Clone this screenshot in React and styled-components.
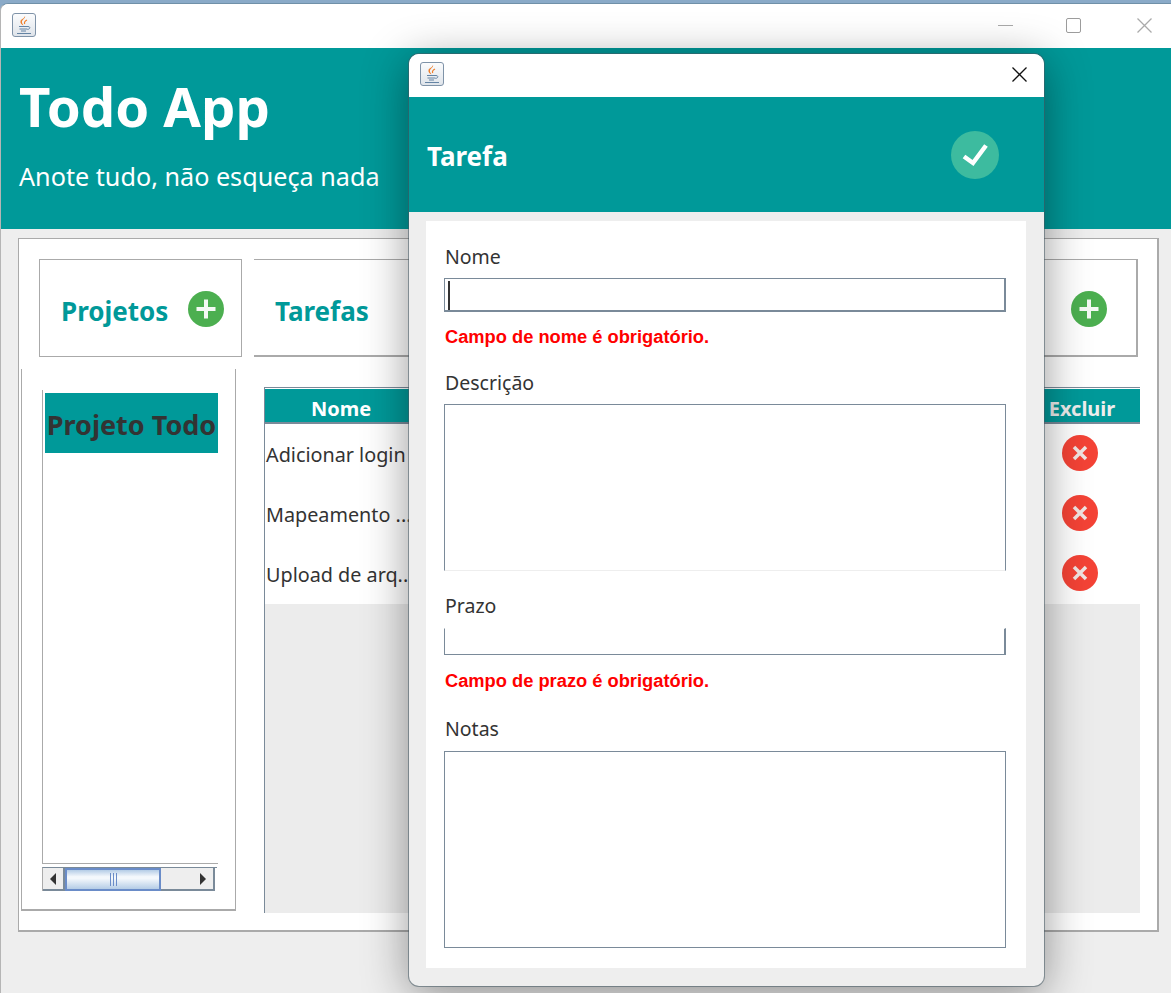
import styled, { createGlobalStyle } from 'styled-components';

const teal = '#009999';
const line = '#aaaaaa';
const steel = '#7a8a99';
const font = '"Noto Sans", "Open Sans", sans-serif';

const projects = ['Adicionar login', 'Mapeamento ...', 'Upload de arq...'];

const GlobalStyle = createGlobalStyle`
    html, body {
        margin: 0;
        padding: 0;
        background: #8aaac8;
    }
    body {
        font-family: ${font};
        color: #333333;
    }
`;

const JavaIcon = () => (
    <IconFrame>
        <svg width="22" height="22" viewBox="0 0 22 22" fill="none">
            <path d="M12 2c1 2.500-3.500 3.500-3 6.500.200 1.300 1.200 2 1.500 3-2-1-3.500-2.500-3-4.500C8 5 11.500 4.500 12 2z" fill="#ee7f2d" />
            <path d="M14 6c-2 1-3.200 2-2.300 4" stroke="#ee7f2d" strokeWidth="1.200" />
            <path d="M6 12.500h9M6.500 15h8M8 17h5M4 19.500h14" stroke="#6484a4" strokeWidth="1" />
            <path d="M15 12.500c2.500 0 2.500 2.500-.5 3" stroke="#6484a4" strokeWidth="1" />
        </svg>
    </IconFrame>
);

const PlusIcon = () => (
    <svg width="36" height="36" viewBox="0 0 36 36">
        <circle cx="18" cy="18" r="18" fill="#4caf50" />
        <path d="M18 8.500v19M8.500 18h19" stroke="#f4f9f4" strokeWidth="4" />
    </svg>
);

const RemoveIcon = () => (
    <svg width="36" height="36" viewBox="0 0 36 36">
        <circle cx="18" cy="18" r="18" fill="#f44336" />
        <path d="M12 12l12 12M24 12L12 24" stroke="#f0e4e2" strokeWidth="3.500" />
    </svg>
);

const CheckIcon = () => (
    <svg width="48" height="48" viewBox="0 0 48 48">
        <circle cx="24" cy="24" r="24" fill="#3dbb9f" />
        <path d="M13 25.500l9 6.500 13-17.500" fill="none" stroke="#ffffff" strokeWidth="4.500" />
    </svg>
);

const CloseIcon = ({ color = '#aaaaaa' }) => (
    <svg width="15" height="15" viewBox="0 0 15 15">
        <path d="M.5.500l14 14M14.500.500l-14 14" stroke={color} strokeWidth="1.300" />
    </svg>
);

const App = () => {
    return (
        <Page>
            <GlobalStyle />
            <Window>
                <TitleBar>
                    <JavaIcon />
                    <WindowControls>
                        <Minimize />
                        <Maximize />
                        <CloseIcon />
                    </WindowControls>
                </TitleBar>
                <Header>
                    <AppTitle>Todo App</AppTitle>
                    <AppSubtitle>Anote tudo, não esqueça nada</AppSubtitle>
                </Header>
                <Content>
                    <Panel>
                        <ProjectsCard>
                            <CardTitle>Projetos</CardTitle>
                            <PlusIcon />
                        </ProjectsCard>
                        <TasksCard>
                            <CardTitle>Tarefas</CardTitle>
                            <PlusIcon />
                        </TasksCard>
                        <Sidebar>
                            <ProjectList>
                                <ProjectItem>Projeto Todo</ProjectItem>
                            </ProjectList>
                            <Scrollbar>
                                <ArrowButton><LeftArrow /></ArrowButton>
                                <Thumb><Grip /><Grip /><Grip /></Thumb>
                                <Track />
                                <ArrowButton><RightArrow /></ArrowButton>
                            </Scrollbar>
                        </Sidebar>
                        <TaskTable>
                            <HeadRow>
                                <NameHead>Nome</NameHead>
                                <DeleteHead>Excluir</DeleteHead>
                            </HeadRow>
                            {projects.map((name) => (
                                <TaskRow key={name}>
                                    <TaskName>{name}</TaskName>
                                    <DeleteCell><RemoveIcon /></DeleteCell>
                                </TaskRow>
                            ))}
                            <TableEmpty />
                        </TaskTable>
                    </Panel>
                </Content>
            </Window>

            <Dialog>
                <DialogBar>
                    <JavaIcon />
                    <CloseIcon color="#111111" />
                </DialogBar>
                <DialogHeader>
                    <DialogTitle>Tarefa</DialogTitle>
                    <CheckIcon />
                </DialogHeader>
                <Form>
                    <Label>Nome</Label>
                    <NameInput><Caret /></NameInput>
                    <ErrorText $top={14}>Campo de nome é obrigatório.</ErrorText>
                    <Label $top={21}>Descrição</Label>
                    <DescriptionArea />
                    <Label $top={21}>Prazo</Label>
                    <DateInput />
                    <ErrorText $top={15}>Campo de prazo é obrigatório.</ErrorText>
                    <Label $top={23}>Notas</Label>
                    <NotesArea />
                </Form>
            </Dialog>
        </Page>
    );
};

const Page = styled.div`
    position: relative;
    width: 1171px;
    height: 993px;
    overflow: hidden;
    padding-top: 3px;
    box-sizing: border-box;
`;

const Window = styled.div`
    height: 990px;
    box-sizing: border-box;
    display: flex;
    flex-direction: column;
    background: #eeeeee;
    border-top: 1px solid #7090a8;
    border-left: 1px solid #b5b5b5;
    border-radius: 8px 0 0 0;
    overflow: hidden;
`;

const TitleBar = styled.div`
    flex: 0 0 44px;
    box-sizing: border-box;
    display: flex;
    align-items: center;
    justify-content: space-between;
    padding: 0 19px 2px 11px;
    background: #ffffff;
`;

const IconFrame = styled.div`
    width: 24px;
    height: 24px;
    box-sizing: border-box;
    display: flex;
    align-items: center;
    justify-content: center;
    border: 1px solid #7f93a8;
    border-radius: 3px;
    background: linear-gradient(#fbfcfd, #dfe4ea);
`;

const WindowControls = styled.div`
    display: flex;
    align-items: center;
    gap: 55px;
`;

const Minimize = styled.div`
    width: 15px;
    height: 1px;
    margin-right: -2px;
    background: ${line};
`;

const Maximize = styled.div`
    width: 15px;
    height: 15px;
    margin-right: 1px;
    box-sizing: border-box;
    border: 1px solid #9c9c9c;
    border-radius: 2px;
`;

const Header = styled.div`
    flex: 0 0 181px;
    box-sizing: border-box;
    padding: 19px 0 0 18px;
    background: ${teal};
    color: #ffffff;
`;

const AppTitle = styled.div`
    font-size: 54.5px;
    font-weight: 700;
    line-height: 78px;
`;

const AppSubtitle = styled.div`
    margin-top: 11px;
    font-size: 25.2px;
    line-height: 40px;
`;

const Content = styled.div`
    flex: 1;
    padding: 9px 11px 0 17px;
`;

const Panel = styled.div`
    width: 1141px;
    height: 694px;
    box-sizing: border-box;
    display: grid;
    grid-template-columns: 221px 884px;
    grid-template-rows: 98px 542px;
    column-gap: 12px;
    row-gap: 12px;
    padding: 20px 0 0 2px;
    background: #ffffff;
    border: 1px solid ${line};
    border-width: 1px 2px 2px 1px;
`;

const Card = styled.div`
    box-sizing: border-box;
    display: flex;
    align-items: center;
    justify-content: space-between;
    padding-top: 2px;
    border: 1px solid ${line};
`;

const ProjectsCard = styled(Card)`
    margin-left: 18px;
    padding-left: 21px;
    padding-right: 17px;
`;

const TasksCard = styled(Card)`
    padding-left: 21px;
    padding-right: 29px;
    border-width: 1px 2px 2px 0;
`;

const CardTitle = styled.div`
    font-size: 26px;
    font-weight: 700;
    color: ${teal};
    margin-top: 4px;
`;

const Sidebar = styled.div`
    width: 215px;
    box-sizing: border-box;
    padding: 21px 0 0 20px;
    border: 1px solid ${line};
    border-width: 0 1px 2px 1px;
`;

const ProjectList = styled.div`
    width: 176px;
    height: 474px;
    box-sizing: border-box;
    padding: 3px 0 0 2px;
    border-left: 1px solid ${line};
    border-bottom: 1px solid ${line};
`;

const ProjectItem = styled.div`
    height: 60px;
    box-sizing: border-box;
    padding-top: 3px;
    display: flex;
    align-items: center;
    justify-content: center;
    background: ${teal};
    font-size: 27px;
    font-weight: 700;
    white-space: nowrap;
`;

const Scrollbar = styled.div`
    width: 174px;
    height: 23px;
    margin-top: 3px;
    display: flex;
    border-top: 1px solid ${steel};
    border-left: 1px solid ${line};
`;

const ArrowButton = styled.div`
    width: 22px;
    box-sizing: border-box;
    display: flex;
    align-items: center;
    justify-content: center;
    background: #eeeeee;
    border-bottom: 2px solid ${steel};
    border-right: 2px solid ${steel};
`;

const LeftArrow = styled.div`
    border: 6px solid transparent;
    border-left-width: 0;
    border-right-color: #333333;
`;

const RightArrow = styled.div`
    border: 6px solid transparent;
    border-right-width: 0;
    border-left-color: #333333;
`;

const Thumb = styled.div`
    width: 96px;
    box-sizing: border-box;
    display: flex;
    align-items: center;
    justify-content: center;
    gap: 2px;
    border: 2px solid #6a8cc8;
    background: linear-gradient(#b4cce6, #f4f8fc 35%, #f4f8fc 45%, #b4cce6);
`;

const Grip = styled.div`
    width: 1px;
    height: 13px;
    background: #6a8cc8;
`;

const Track = styled.div`
    width: 32px;
    background: #eeeeee;
    border-bottom: 2px solid ${steel};
`;

const TaskTable = styled.div`
    width: 876px;
    height: 526px;
    margin: 18px 0 0 10px;
    box-sizing: border-box;
    display: flex;
    flex-direction: column;
    border-left: 1px solid ${steel};
    border-top: 1px solid ${steel};
`;

const HeadRow = styled.div`
    height: 36px;
    box-sizing: border-box;
    display: flex;
    justify-content: space-between;
    padding-top: 6px;
    border-top: 1px solid #ffffff;
    border-bottom: 2px solid ${steel};
    background: ${teal};
    color: #ffffff;
    font-size: 20px;
    font-weight: 700;
`;

const NameHead = styled.div`
    width: 152px;
    text-align: center;
`;

const DeleteHead = styled.div`
    width: 116px;
    text-align: center;
    color: #eeeeee;
`;

const TaskRow = styled.div`
    height: 60px;
    display: flex;
    justify-content: space-between;
    background: #ffffff;
`;

const TaskName = styled.div`
    padding-left: 1px;
    font-size: 19.8px;
    line-height: 62px;
`;

const DeleteCell = styled.div`
    width: 120px;
    box-sizing: border-box;
    padding-bottom: 2px;
    display: flex;
    align-items: center;
    justify-content: center;
`;

const TableEmpty = styled.div`
    flex: 1;
    background: #ececec;
`;

const Dialog = styled.div`
    position: absolute;
    left: 409px;
    top: 54px;
    width: 635px;
    height: 932px;
    display: flex;
    flex-direction: column;
    border-radius: 10px;
    overflow: hidden;
    background: #eeeeee;
    box-shadow: 0 0 0 1px rgba(70, 90, 100, 0.55), 0 8px 46px rgba(0, 0, 0, 0.42);
`;

const DialogBar = styled.div`
    flex: 0 0 43px;
    display: flex;
    align-items: center;
    justify-content: space-between;
    padding: 0 17px 3px 11px;
    box-sizing: border-box;
    background: #ffffff;
`;

const DialogHeader = styled.div`
    flex: 0 0 115px;
    display: flex;
    align-items: center;
    justify-content: space-between;
    box-sizing: border-box;
    padding: 0 45px 0 18px;
    background: ${teal};
`;

const DialogTitle = styled.div`
    margin-top: 2px;
    font-size: 26px;
    font-weight: 700;
    color: #ffffff;
`;

const Form = styled.div`
    width: 600px;
    height: 747px;
    margin: 9px 0 0 17px;
    box-sizing: border-box;
    padding: 22px 0 0 18px;
    display: flex;
    flex-direction: column;
    align-items: flex-start;
    background: #ffffff;
`;

const Label = styled.div`
    margin: ${(p) => p.$top || 0}px 0 0 1px;
    font-size: 19.5px;
    line-height: 28px;
    height: 28px;
`;

const Field = styled.div`
    box-sizing: border-box;
    width: 562px;
    margin-top: 8px;
    border: 1px solid ${steel};
`;

const NameInput = styled(Field)`
    height: 34px;
    margin-top: 7px;
    padding: 2px;
    border-width: 1px 2px 2px 1px;
`;

const Caret = styled.div`
    width: 2px;
    height: 29px;
    background: #333333;
    margin-left: 1px;
`;

const DescriptionArea = styled(Field)`
    height: 167px;
    margin-top: 7px;
    border-bottom-color: #eeeeee;
`;

const DateInput = styled(Field)`
    height: 27px;
    border-top-color: transparent;
    border-right-width: 2px;
`;

const NotesArea = styled(Field)`
    height: 197px;
`;

const ErrorText = styled.div`
    margin: ${(p) => p.$top}px 0 0 1px;
    font-family: "Liberation Sans", Arial, sans-serif;
    font-size: 18.3px;
    font-weight: 700;
    line-height: 22px;
    color: #ff0000;
`;

export default App;
